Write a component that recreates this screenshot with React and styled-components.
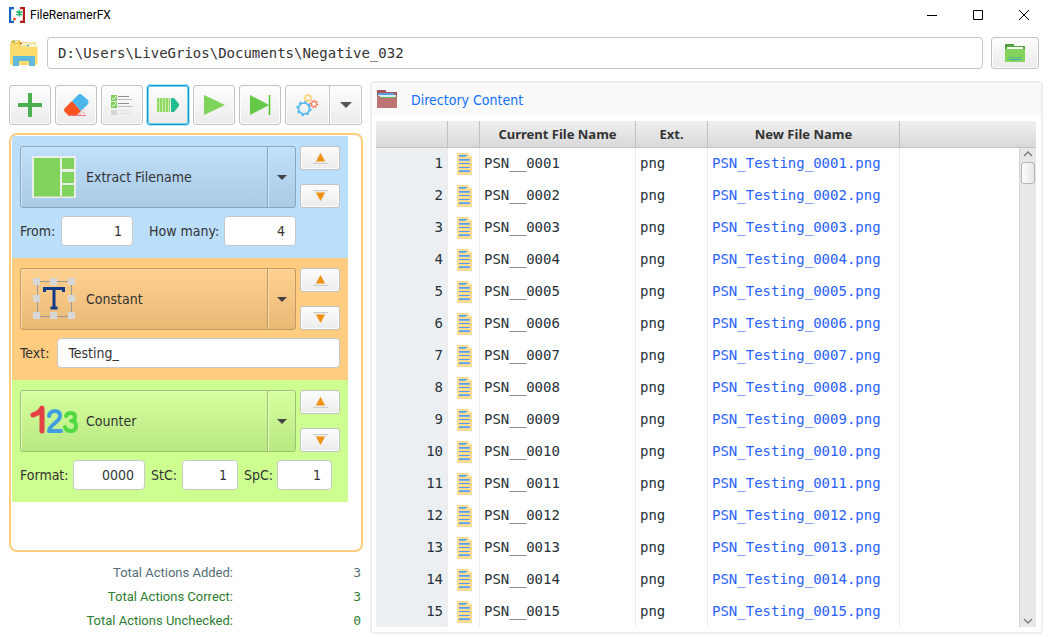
import React from "react";
import styled, { createGlobalStyle, css } from "styled-components";

const ui = '"DejaVu Sans Condensed", "Noto Sans", sans-serif';
const humanist = '"Noto Sans", sans-serif';
const compact = 'Roboto, "Noto Sans", sans-serif';
const mono = '"DejaVu Sans Mono", monospace';

const GlobalStyle = createGlobalStyle`
  *, *::before, *::after { box-sizing: border-box; }
  body { margin: 0; background: #fff; color: #333; font: 14px/20px ${ui}; }
  button, input, textarea { font: inherit; color: inherit; margin: 0; }
  svg { display: block; flex: none; }
`;

const Window = styled.div`
  display: flex;
  flex-direction: column;
  height: 100vh;
  overflow: hidden;
`;

const TitleBar = styled.header`
  display: flex;
  align-items: center;
  height: 30px;
  padding: 0 1px 0 9px;
  gap: 5px;
  flex: none;
`;

const Title = styled.h1`
  flex: 1;
  margin: 0;
  font: 400 12px/20px ${compact};
  color: #000;
`;

const WindowControls = styled.div`
  display: flex;
`;

const WindowButton = styled.button`
  display: flex;
  align-items: center;
  justify-content: center;
  width: 46px;
  height: 30px;
  padding: 0;
  border: 0;
  background: transparent;
`;

const PathBar = styled.div`
  display: flex;
  align-items: center;
  gap: 8px;
  padding: 7px 9px 0 9px;
  flex: none;
`;

const PathInput = styled.textarea`
  flex: 1;
  min-width: 0;
  height: 32px;
  padding: 5px 10px;
  border: 1px solid #c4c4c4;
  border-radius: 4px;
  background: #fff;
  font-family: ${mono};
  white-space: nowrap;
  overflow: hidden;
  resize: none;
`;

const raised = css`
  display: flex;
  align-items: center;
  justify-content: center;
  padding: 0;
  border: 1px solid #c3c3c3;
  border-radius: 3px;
  background: linear-gradient(#fdfdfd, #ebebeb);
  box-shadow: inset 0 0 0 1px #fdfdfd;
`;

const BrowseButton = styled.button`
  ${raised}
  width: 48px;
  height: 32px;
`;

const Main = styled.main`
  display: flex;
  flex: 1;
  min-height: 0;
  gap: 7px;
  padding: 12px 5px 3px 9px;
`;

const Sidebar = styled.section`
  display: flex;
  flex-direction: column;
  flex: 0 0 354px;
  min-height: 0;
  padding: 4px 0 1px;
`;

const Toolbar = styled.div`
  display: flex;
  gap: 4px;
  flex: none;
`;

const ToolButton = styled.button`
  ${raised}
  width: 42px;
  height: 40px;
  ${(p) => p.$focused && css`
    border-color: #039ed3;
    box-shadow: 0 0 1px 1px #b4e2f2, inset 0 0 0 1px #7fcee9;
  `}
`;

const ToolSplit = styled.div`
  display: flex;
`;

const SplitMain = styled(ToolButton)`
  width: 45px;
  border-radius: 3px 0 0 3px;
`;

const SplitMenu = styled(ToolButton)`
  width: 33px;
  margin-left: -1px;
  border-radius: 0 3px 3px 0;
`;

const ActionList = styled.ol`
  flex: 1;
  min-height: 0;
  margin: 8px 0 0;
  padding: 1px 13px 1px 1px;
  border: 2px solid #ffcc80;
  border-radius: 8px;
  list-style: none;
  overflow: hidden;
`;

const ActionItem = styled.li`
  display: flex;
  flex-direction: column;
  gap: 8px;
  padding: 10px 8px 12px;
  background: ${(p) => p.$tone.back};
`;

const ActionHead = styled.div`
  display: flex;
  gap: 4px;
  height: 62px;
`;

const ActionType = styled.button`
  display: flex;
  align-items: center;
  gap: 8px;
  flex: 1;
  padding: 0 9px;
  text-align: left;
  border: 1px solid ${(p) => p.$tone.edge};
  border-radius: 3px 0 0 3px;
  background: linear-gradient(${(p) => p.$tone.top}, ${(p) => p.$tone.bottom});
  box-shadow: inset 1px 1px 0 ${(p) => p.$tone.shine};
`;

const ActionMenu = styled(ActionType)`
  flex: 0 0 29px;
  justify-content: center;
  margin-left: -5px;
  padding: 0;
  border-radius: 0 3px 3px 0;
`;

const Movers = styled.div`
  display: flex;
  flex-direction: column;
  justify-content: space-between;
`;

const MoveButton = styled.button`
  ${raised}
  width: 40px;
  height: 24px;
`;

const Fields = styled.div`
  display: flex;
  align-items: center;
  gap: ${(p) => p.$gap || 4}px;
`;

const Field = styled.label`
  display: flex;
  align-items: center;
  justify-content: space-between;
  white-space: nowrap;
  ${(p) => (p.$width ? css`width: ${p.$width}px; gap: 4px;` : css`flex: 1; gap: 8px;`)}
`;

const FieldInput = styled.input`
  height: 30px;
  min-width: 0;
  padding: 0 10px;
  border: 1px solid #c8c8c8;
  border-radius: 4px;
  background: #fff;
  ${(p) => (p.$width ? css`width: ${p.$width}px; text-align: right;` : css`flex: 1;`)}
`;

const Totals = styled.dl`
  flex: none;
  margin: 9px 0 0;
`;

const Total = styled.div`
  display: grid;
  grid-template-columns: 224px 1fr;
  padding-right: 2px;
  font-size: 13px;
  line-height: 24px;
  text-align: right;
  color: ${(p) => p.$color};
  dt { font-family: ${compact}; }
  dd { margin: 0; font-family: ${mono}; }
`;

const Panel = styled.section`
  display: flex;
  flex-direction: column;
  flex: 1;
  min-width: 0;
  border: 2px solid #eee;
  border-radius: 4px;
  padding-bottom: 5px;
`;

const PanelHead = styled.header`
  display: flex;
  align-items: center;
  gap: 14px;
  height: 33px;
  padding-left: 5px;
  background: #fafafa;
  flex: none;
`;

const PanelTitle = styled.h2`
  margin: 0;
  font: 400 14px/20px ${ui};
  color: #1070ff;
`;

const TableArea = styled.div`
  position: relative;
  flex: 1;
  min-height: 0;
  margin: 5px 5px 0 4px;
  overflow: hidden;
`;

const Table = styled.table`
  width: 100%;
  table-layout: fixed;
  border-collapse: separate;
  border-spacing: 0;
`;

const HeadCell = styled.th`
  height: 27px;
  padding: 0;
  font: 700 13px/20px ${humanist};
  text-align: center;
  border-right: ${(p) => (p.$last ? 0 : 1)}px solid #c0c0c0;
  border-bottom: 1px solid #c0c0c0;
  background: linear-gradient(#efefef, #d9d9d9);
`;

const Cell = styled.td`
  height: 32px;
  padding: 0 4px 2px;
  border-right: ${(p) => (p.$plain ? 0 : 1)}px solid #ececec;
  font: 14px/20px ${mono};
  color: ${(p) => (p.$renamed ? "#2962ff" : "#263238")};
  ${(p) => p.$index && css`text-align: right; background: #eceff1;`}
`;

const IconCell = styled(Cell)`
  padding: 0 0 0 9px;
`;

const ScrollTrack = styled.div`
  position: absolute;
  top: 27px;
  right: 0;
  bottom: 0;
  display: flex;
  flex-direction: column;
  align-items: center;
  width: 17px;
  padding: 3px 0;
  border-left: 1px solid #d4d4d4;
  background: #e8e8e8;
`;

const ScrollThumb = styled.div`
  width: 14px;
  height: 22px;
  margin: 5px 0 auto;
  border: 1px solid #b4b4b4;
  border-radius: 3px;
  background: linear-gradient(90deg, #fdfdfd, #e6e6e6);
`;

const AppIcon = () => (
  <svg width="16" height="16" viewBox="0 0 16 16">
    <path d="M5 1H1v14h4" fill="none" stroke="#1565c0" strokeWidth="2.400" />
    <path d="M11 1h4v14h-4" fill="none" stroke="#b71c1c" strokeWidth="2.400" />
    <path d="M10.300 3v6.500M7.500 4.500l5.600 3.500M13.100 4.500l-5.600 3.500" stroke="#1fb56b" strokeWidth="1.500" />
    <circle cx="5.500" cy="12" r="1.500" fill="#f4511e" />
  </svg>
);

const FoldersIcon = () => (
  <svg width="30" height="28" viewBox="0 0 30 28">
    <path d="M2 5V2l2-1h6l2 2h7v5H2z" fill="#e9c64f" />
    <path d="M12 5l1-1h6l2-1h6v7H12z" fill="#f7e6a0" />
    <path d="M4 2.500h5M12 4.500h6M19 6.500h7" stroke="#fff" strokeWidth="1.500" />
    <path d="M4 2.500h2" stroke="#4caf50" /><path d="M11 4.500h2" stroke="#f4511e" /><path d="M18 6.500h2" stroke="#29a4f4" />
    <path d="M1 5h9l2 3h16.500v16q0 2-2 2H3q-2 0-2-2z" fill="#fbdc6c" />
    <path d="M4 17h22v10h-6v-5H10v5H4z" fill="#61b9dc" />
  </svg>
);

const BrowseIcon = () => (
  <svg width="20" height="18" viewBox="0 0 20 18">
    <path d="M0 0h9v2h11v5H0z" fill="#4fa33a" />
    <path d="M0 5h20v13H0z" fill="#82d45d" />
    <path d="M2 3h16v2H2z" fill="#f4fff0" />
    <path d="M3 13.500h14" stroke="#62b583" /><path d="M4 15.500h12" stroke="#3f9fb5" />
  </svg>
);

const PlusIcon = () => (
  <svg width="24" height="24" viewBox="0 0 24 24">
    <path d="M12 1v22M1 12h22" stroke="#4caf50" strokeWidth="4" strokeLinecap="round" />
  </svg>
);

const EraserIcon = () => (
  <svg width="25" height="23" viewBox="0 0 25 23">
    <path d="M8 7l9 10-4 4H4l-3-3q-2-2 0-4z" fill="#ff5320" />
    <path d="M8 7l6-6q2-2 4 0l6 5q1 2 0 4l-7 7z" fill="#4cb5ea" />
    <path d="M4 21.500h18" stroke="#ee6c86" />
    <path d="M17 18h1M20 16h1M19 19h2M15 20h2" stroke="#ff8a76" />
  </svg>
);

const ChecklistIcon = () => (
  <svg width="22" height="21" viewBox="0 0 22 21">
    <path d="M0 0h6v6H0zM0 7h6v6H0z" fill="#7ecf59" />
    <path d="M0 15h6v5H0z" fill="#d5d5d5" />
    <path d="M1 3l1.500 1.500L5 1M1 10l1.500 1.500L5 8" fill="none" stroke="#fff" />
    <path d="M7 1.500h11M7 8.500h11" stroke="#8d8d8d" />
    <path d="M7 4.500h14M7 11.500h14" stroke="#bcbcbc" />
    <path d="M7 15.500h11M7 18.500h14" stroke="#e2e2e2" />
  </svg>
);

const CrayonIcon = () => (
  <svg width="23" height="14" viewBox="0 0 23 14">
    <path d="M0 0h13v14H0z" fill="#91d962" />
    <path d="M2.500 0v14M5.500 0v14M8.500 0v14M11.500 0v14" stroke="#c9edb0" />
    <path d="M13.500 0v14" stroke="#f2f2f2" />
    <path d="M14 0h3l5 6v2l-5 6h-3z" fill="#24bd91" />
  </svg>
);

const PlayIcon = () => (
  <svg width="21" height="20" viewBox="0 0 21 20"><path d="M0 0l21 10L0 20z" fill="#7ed35b" /></svg>
);

const PlayEndIcon = () => (
  <svg width="21" height="20" viewBox="0 0 21 20">
    <path d="M0 0l19 10L0 20z" fill="#64c947" /><path d="M19.500 0v20" stroke="#4fc42e" strokeWidth="1.500" />
  </svg>
);

const Gear = ({ x, y, r, color, width }) => (
  <g fill="none" stroke={color}>
    <circle cx={x} cy={y} r={r} strokeWidth={width} />
    <circle cx={x} cy={y} r={r + width / 2 + 0.5} strokeWidth="1.600" pathLength="32" strokeDasharray="2 2" />
  </g>
);

const GearsIcon = () => (
  <svg width="23" height="23" viewBox="0 0 23 23">
    <Gear x={8} y={14.5} r={5.5} color="#4db8ee" width={1.5} />
    <Gear x={12} y={4} r={2.5} color="#ffc95c" width={1} />
    <Gear x={18} y={10} r={2.5} color="#ff6e51" width={1} />
  </svg>
);

const Caret = ({ color = "#424242" }) => (
  <svg width="10" height="5" viewBox="0 0 10 5"><path d="M0 0h10L5 5z" fill={color} /></svg>
);
const WideCaret = () => (
  <svg width="12" height="6" viewBox="0 0 12 6"><path d="M0 0h12L6 6z" fill="#555" /></svg>
);

const MoveIcon = ({ down }) => (
  <svg width="15" height="12" viewBox="0 0 15 12">
    <g transform={down ? "rotate(180 7.500 6)" : undefined}>
      <path d="M7.500 0l7 11H.5z" fill="#eeeae6" />
      <path d="M7.500 1l4.500 8.500H3z" fill="#ef920f" />
      <path d="M0 11.500h15" stroke="#ccc" />
    </g>
  </svg>
);

const ExtractIcon = () => (
  <svg width="48" height="44" viewBox="0 0 48 44">
    <path d="M2 1h44v42H2z" fill="#e9efe7" />
    <path d="M4 3h26v38H4zM32 3h12v11H32zM32 17h12v11H32zM32 30h12v11H32z" fill="#80d35b" />
    <path d="M4 41.500h40" stroke="#b5dca5" />
  </svg>
);

const ConstantIcon = () => (
  <svg width="48" height="44" viewBox="0 0 48 44">
    <path d="M7.500 4.500h34v35h-34z" fill="none" stroke="#999" />
    {[3, 20, 38].flatMap((x) => [1, 18, 35].map((y) =>
      x === 20 && y === 18 ? null : <rect key={`${x}-${y}`} x={x} y={y} width="7" height="7" fill="#d8d8d8" />
    ))}
    <path d="M14.500 15v-3.500h19V15M24 11v20M20.500 31h7" fill="none" stroke="#123b87" strokeWidth="3" />
  </svg>
);

const CounterIcon = () => (
  <svg width="48" height="44" viewBox="0 0 48 44" fill="none" strokeLinecap="round" strokeLinejoin="round">
    <path d="M3 16q7-2 9-7v23" stroke="#e34143" strokeWidth="5" />
    <path d="M19 17q1-5 6-5 5 0 5 5 0 3-5 7-6 5-6 8h12" stroke="#429fdf" strokeWidth="4" />
    <path d="M36 17q1-3 5-3 4 0 4 4 0 4-4 4 5 0 5 5 0 5-5 5-5 0-6-4" stroke="#50d943" strokeWidth="4" />
  </svg>
);

const DirectoryIcon = () => (
  <svg width="20" height="19" viewBox="0 0 20 19">
    <path d="M0 0h9v2h11v8H0z" fill="#a55659" />
    <path d="M1 3h16l1 3H1z" fill="#5c9fe0" />
    <path d="M1 5h18v3H1z" fill="#d5ecfb" /><path d="M3 7.500h16" stroke="#63bd4d" />
    <path d="M0 6h3v2h17v10H0z" fill="#be7474" />
  </svg>
);

const FileIcon = () => (
  <svg width="15" height="22" viewBox="0 0 15 22">
    <path d="M0 0h11l4 4v18H0z" fill="#ffdc91" />
    <path d="M11 0l4 4h-4z" fill="#ffe9bb" />
    <path d="M2 2h8v1H2zM2 6h11v1H2zM2 10h11v1H2zM2 14h11v1H2zM2 18h11v1H2z" fill="#4f9ff5" />
    <path d="M2 3h7v1H2zM2 7h11v1H2zM2 17h11v1H2z" fill="#7fb2e0" />
  </svg>
);

const Chevron = ({ down }) => (
  <svg width="10" height="6" viewBox="0 0 10 6">
    <path d={down ? "M1 1l4 4 4-4" : "M1 5l4-4 4 4"} fill="none" stroke="#808080" strokeWidth="1.500" />
  </svg>
);

const TONES = {
  blue: { back: "#bbdefb", top: "#c0e0fa", bottom: "#a9cae5", edge: "#8aa6bd", shine: "#cfe7fb" },
  orange: { back: "#ffcc80", top: "#ffd190", bottom: "#e8b875", edge: "#c09a62", shine: "#ffddaa" },
  green: { back: "#ccff90", top: "#d5ff9e", bottom: "#b9e883", edge: "#9ac16d", shine: "#e2ffc0" },
};

const ACTIONS = [
  { name: "Extract Filename", Icon: ExtractIcon, tone: TONES.blue, gap: 16, fields: [
    { label: "From:", value: "1", width: 72, total: 113 },
    { label: "How many:", value: "4", width: 72, total: 147 },
  ] },
  { name: "Constant", Icon: ConstantIcon, tone: TONES.orange, fields: [{ label: "Text:", value: "Testing_" }] },
  { name: "Counter", Icon: CounterIcon, tone: TONES.green, gap: 6, fields: [
    { label: "Format:", value: "0000", width: 72, total: 125 },
    { label: "StC:", value: "1", width: 56, total: 87 },
    { label: "SpC:", value: "1", width: 56, total: 88 },
  ] },
];

const TOTALS = [
  ["Total Actions Added:", 3, "#546e7a"],
  ["Total Actions Correct:", 3, "#2e7d32"],
  ["Total Actions Unchecked:", 0, "#2e7d32"],
];

const FILES = Array.from({ length: 15 }, (_, i) => String(i + 1).padStart(4, "0"));

function Action({ name, Icon, tone, gap, fields }) {
  return (
    <ActionItem $tone={tone}>
      <ActionHead>
        <ActionType $tone={tone}><Icon />{name}</ActionType>
        <ActionMenu $tone={tone} aria-label={`${name} options`}><Caret /></ActionMenu>
        <Movers>
          <MoveButton aria-label="Move up"><MoveIcon /></MoveButton>
          <MoveButton aria-label="Move down"><MoveIcon down /></MoveButton>
        </Movers>
      </ActionHead>
      <Fields $gap={gap}>
        {fields.map((f) => (
          <Field key={f.label} $width={f.total}>
            {f.label}
            <FieldInput $width={f.width} defaultValue={f.value} />
          </Field>
        ))}
      </Fields>
    </ActionItem>
  );
}

export default function App() {
  return (
    <>
      <GlobalStyle />
      <Window>
        <TitleBar>
          <AppIcon />
          <Title>FileRenamerFX</Title>
          <WindowControls>
            <WindowButton aria-label="Minimize">
              <svg width="10" height="10"><path d="M0 5.500h10" stroke="#000" /></svg>
            </WindowButton>
            <WindowButton aria-label="Maximize">
              <svg width="10" height="10"><path d="M.5.5h9v9h-9z" fill="none" stroke="#000" /></svg>
            </WindowButton>
            <WindowButton aria-label="Close">
              <svg width="10" height="10"><path d="M0 0l10 10M10 0L0 10" stroke="#000" /></svg>
            </WindowButton>
          </WindowControls>
        </TitleBar>
        <PathBar>
          <FoldersIcon />
          <PathInput
            rows={1}
            spellCheck={false}
            aria-label="Directory"
            defaultValue={"D:\\Users\\LiveGrios\\Documents\\Negative_032"}
          />
          <BrowseButton aria-label="Browse"><BrowseIcon /></BrowseButton>
        </PathBar>
        <Main>
          <Sidebar>
            <Toolbar>
              <ToolButton aria-label="Add action"><PlusIcon /></ToolButton>
              <ToolButton aria-label="Clear"><EraserIcon /></ToolButton>
              <ToolButton aria-label="Check actions"><ChecklistIcon /></ToolButton>
              <ToolButton $focused aria-label="Preview"><CrayonIcon /></ToolButton>
              <ToolButton aria-label="Run"><PlayIcon /></ToolButton>
              <ToolButton aria-label="Run to end"><PlayEndIcon /></ToolButton>
              <ToolSplit>
                <SplitMain aria-label="Settings"><GearsIcon /></SplitMain>
                <SplitMenu aria-label="More settings"><WideCaret /></SplitMenu>
              </ToolSplit>
            </Toolbar>
            <ActionList>
              {ACTIONS.map((a) => <Action key={a.name} {...a} />)}
            </ActionList>
            <Totals>
              {TOTALS.map(([label, value, color]) => (
                <Total key={label} $color={color}><dt>{label}</dt><dd>{value}</dd></Total>
              ))}
            </Totals>
          </Sidebar>
          <Panel>
            <PanelHead><DirectoryIcon /><PanelTitle>Directory Content</PanelTitle></PanelHead>
            <TableArea>
              <Table>
                <colgroup>
                  <col width="72" /><col width="32" /><col width="156" /><col width="72" /><col width="192" /><col />
                </colgroup>
                <thead>
                  <tr>
                    <HeadCell /><HeadCell />
                    <HeadCell>Current File Name</HeadCell>
                    <HeadCell>Ext.</HeadCell>
                    <HeadCell>New File Name</HeadCell>
                    <HeadCell $last />
                  </tr>
                </thead>
                <tbody>
                  {FILES.map((n, i) => (
                    <tr key={n}>
                      <Cell $index>{i + 1}</Cell>
                      <IconCell><FileIcon /></IconCell>
                      <Cell>PSN__{n}</Cell>
                      <Cell>png</Cell>
                      <Cell $renamed>PSN_Testing_{n}.png</Cell>
                      <Cell $plain />
                    </tr>
                  ))}
                </tbody>
              </Table>
              <ScrollTrack><Chevron /><ScrollThumb /><Chevron down /></ScrollTrack>
            </TableArea>
          </Panel>
        </Main>
      </Window>
    </>
  );
}
